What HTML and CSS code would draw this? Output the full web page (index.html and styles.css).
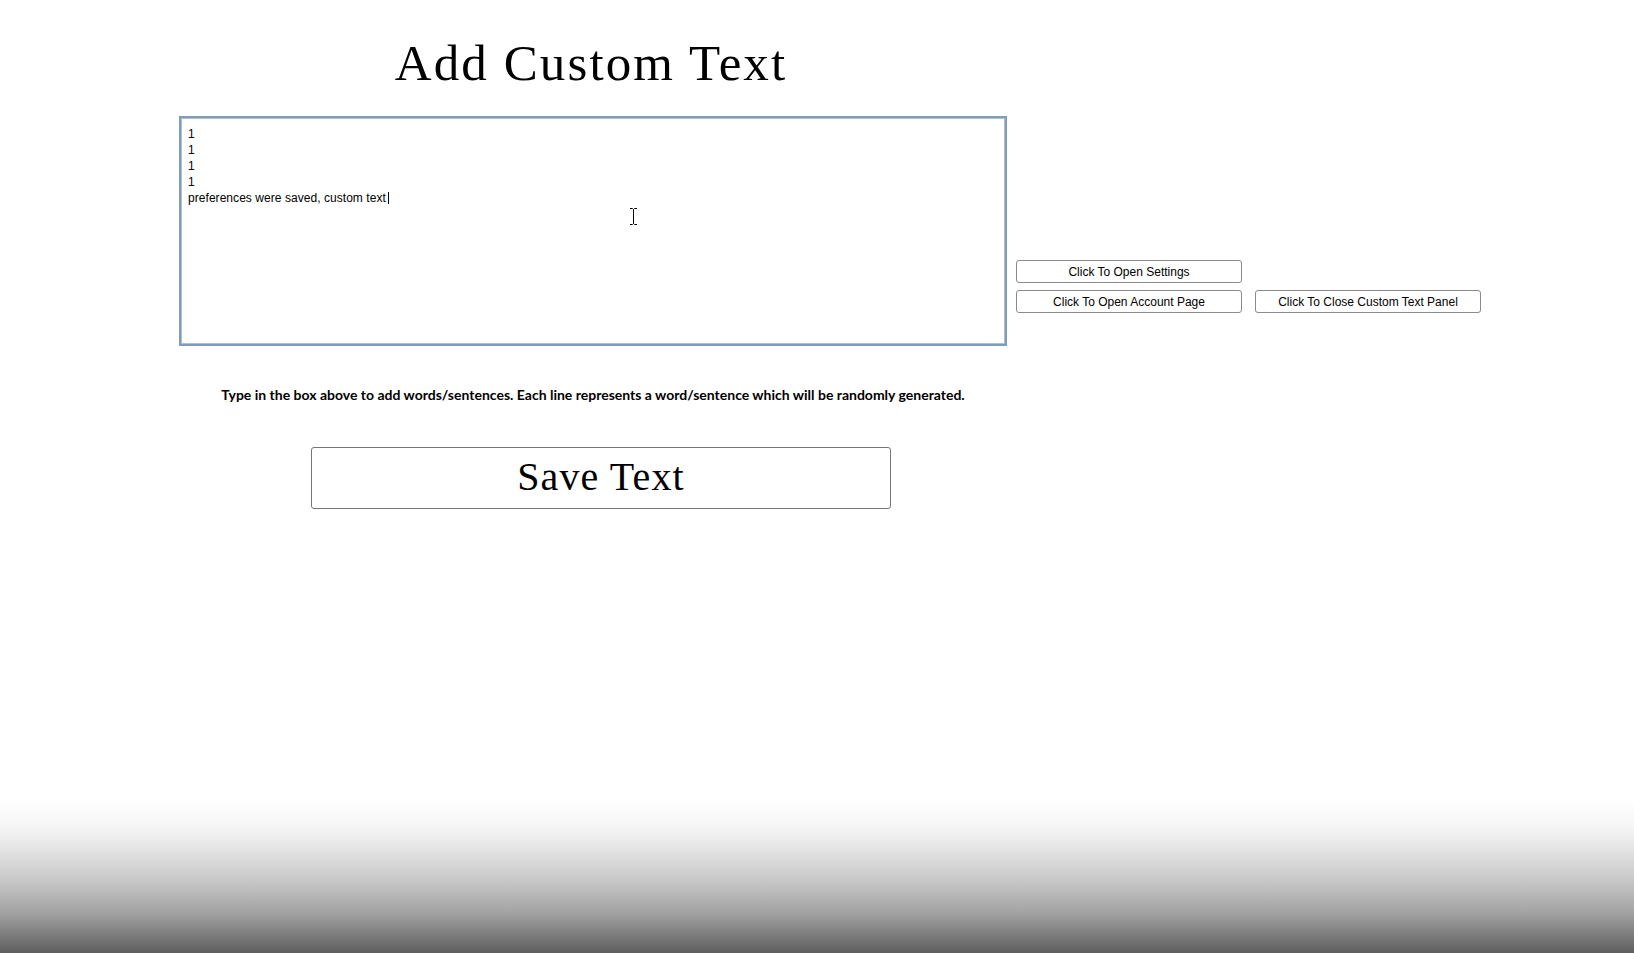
FILE: index.html
```html
<!DOCTYPE html>
<html lang="en">
<head>
<meta charset="utf-8">
<title>Add Custom Text</title>
<link rel="stylesheet" href="styles.css">
</head>
<body>
<main class="page">
  <h1 class="title">Add Custom Text</h1>
  <div class="editor-row">
    <div class="textbox" role="textbox" aria-multiline="true">
      <div class="line">1</div>
      <div class="line">1</div>
      <div class="line">1</div>
      <div class="line">1</div>
      <div class="line">preferences were saved, custom text<span class="caret"></span></div>
    </div>
    <div class="actions">
      <button class="small-btn">Click To Open Settings</button>
      <span class="spacer"></span>
      <button class="small-btn">Click To Open Account Page</button>
      <button class="small-btn">Click To Close Custom Text Panel</button>
    </div>
  </div>
  <p class="hint">Type in the box above to add words/sentences. Each line represents a word/sentence which will be randomly generated.</p>
  <button class="save-btn">Save Text</button>
</main>
<svg class="ibeam" width="9" height="17" viewBox="0 0 9 17" aria-hidden="true">
  <path d="M1 0.5h2.5l1 1 1-1H8M4.5 1.5v14M1 16.5h2.5l1-1 1 1H8" fill="none" stroke="#000" stroke-width="1"/>
</svg>
</body>
</html>
```

FILE: styles.css
```css
html {
  height: 100%;
  background: linear-gradient(to bottom,
    #ffffff 0px,
    #ffffff 800px,
    #f6f6f6 825px,
    #e6e6e6 847px,
    #c8c8c8 880px,
    #a2a2a2 913px,
    #7c7c7c 935px,
    #5e5e5e 953px) no-repeat;
  background-color: #5e5e5e;
}

body {
  margin: 0;
  height: 100%;
  font-family: "Liberation Sans", Arial, sans-serif;
  color: #000;
}

.page {
  width: 828px;
  padding-left: 179px;
  padding-top: 38px;
}

.title {
  margin: 0;
  font-family: "Liberation Serif", "Times New Roman", serif;
  font-weight: normal;
  font-size: 51px;
  line-height: 50px;
  letter-spacing: 2.1px;
  text-align: center;
  padding-right: 4px;
}

.editor-row {
  display: flex;
  align-items: flex-end;
  gap: 9px;
  margin-top: 28px;
  width: 1400px;
}

.textbox {
  box-sizing: border-box;
  flex: 0 0 828px;
  height: 230px;
  border: 2px solid #7f9db9;
  box-shadow: inset 0 0 0 1px #aebfd3;
  padding: 9px 6px 9px 7px;
  font-size: 12px;
  line-height: 15.9px;
  background: #fff;
  letter-spacing: 0.05px;
}

.caret {
  display: inline-block;
  width: 1px;
  height: 12px;
  background: #000;
  margin-left: 2px;
  vertical-align: -2px;
}

.actions {
  display: grid;
  grid-template-columns: 226px 226px;
  column-gap: 13px;
  row-gap: 7px;
  margin-bottom: 33px;
}

.small-btn {
  box-sizing: border-box;
  height: 23px;
  padding: 0;
  border: 1px solid #8b8b8b;
  border-radius: 3px;
  background: #fff;
  font-family: "Liberation Sans", Arial, sans-serif;
  font-size: 12px;
  color: #000;
}

.hint {
  margin: 41px 0 0;
  font-family: Lato, "Liberation Sans", sans-serif;
  font-weight: bold;
  font-size: 14px;
  line-height: 16px;
  text-align: center;
  white-space: nowrap;
  letter-spacing: 0;
}

.save-btn {
  display: block;
  box-sizing: border-box;
  width: 580px;
  height: 62px;
  margin: 44px 0 0 132px;
  padding: 0 0 3px;
  border: 1px solid #767676;
  border-radius: 3px;
  background: #fff;
  font-family: "Liberation Serif", "Times New Roman", serif;
  font-size: 40px;
  letter-spacing: 1.1px;
  color: #000;
}

.ibeam {
  position: absolute;
  left: 629px;
  top: 208px;
}
```
